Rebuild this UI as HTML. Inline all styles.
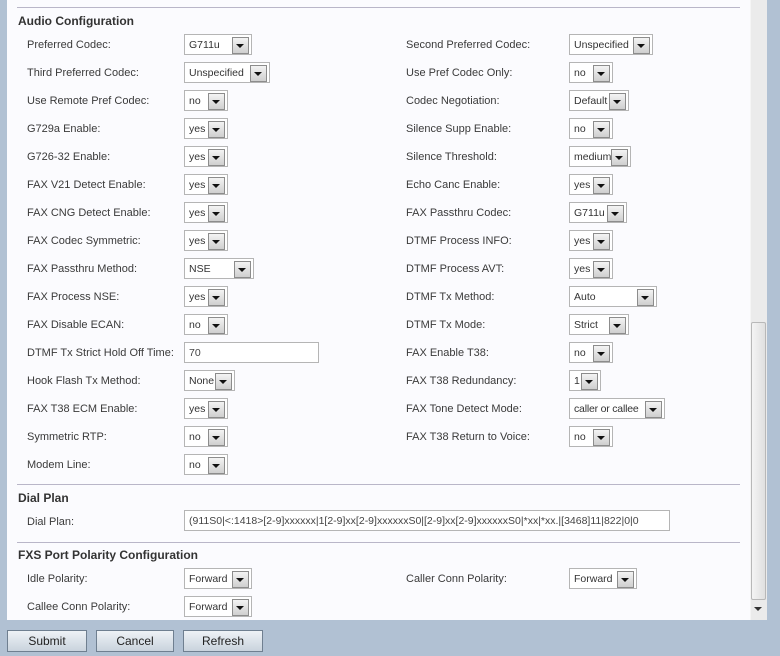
<!DOCTYPE html>
<html><head><meta charset="utf-8"><style>
*{margin:0;padding:0;box-sizing:border-box}
body{width:780px;height:656px;background:#b1c1d3;position:relative;overflow:hidden;font-family:"Liberation Sans",Arial,sans-serif;font-size:11px;color:#3a3a3a}
#panel{position:absolute;left:7px;top:0;width:743px;height:620px;background:#fbfbfe}
#sb{position:absolute;left:750px;top:0;width:17px;height:620px;background:#ebebeb;border-left:1px solid #f5f5f5}
#thumb{position:absolute;left:751px;top:322px;width:15px;height:278px;background:linear-gradient(90deg,#f4f4f4,#e0e0e0);border:1px solid #b8b8b8;border-radius:2px}
.l,.h,.s,.i,.hr,.b{position:absolute}
.l{line-height:14px}
.h{font-weight:bold;font-size:12px;color:#333}
.hr{left:17px;width:723px;height:1px;background:#b9b6c8}
.s{height:21px;border:1px solid #b5b5b5;background:#fff;padding-left:4px;display:flex;align-items:center;color:#333;font-size:10.5px;white-space:nowrap}
.s::after{content:"";position:absolute;right:2px;top:2px;width:15px;height:15px;border:1px solid #8c8c8c;background:linear-gradient(#f3f3f3,#cfcfcf)}
.s::before{content:"";position:absolute;right:7px;top:9px;border-left:4px solid transparent;border-right:4px solid transparent;border-top:4px solid #111;z-index:2}
.i{height:21px;border:1px solid #b5b5b5;background:#fff;padding-left:4px;display:flex;align-items:center;color:#444;white-space:nowrap;overflow:hidden;font-size:10.5px}
.b{top:630px;height:22px;border:1px solid #6f7f90;background:linear-gradient(#eef2f6,#c9d3dd);text-align:center;line-height:20px;font-size:12px;color:#222}
</style></head><body>
<div id="panel"></div>
<div id="sb"></div><div id="thumb"></div>
<div style="position:absolute;left:754px;top:607px;border-left:4px solid transparent;border-right:4px solid transparent;border-top:4px solid #333"></div>
<div class="hr" style="top:7px"></div>
<div class="h" style="left:18px;top:14px">Audio Configuration</div>

<div class="l" style="left:27px;top:38px">Preferred Codec:</div><div class="s" style="left:184px;top:34px;width:68px">G711u</div>
<div class="l" style="left:406px;top:38px">Second Preferred Codec:</div><div class="s" style="left:569px;top:34px;width:84px">Unspecified</div>

<div class="l" style="left:27px;top:66px">Third Preferred Codec:</div><div class="s" style="left:184px;top:62px;width:86px">Unspecified</div>
<div class="l" style="left:406px;top:66px">Use Pref Codec Only:</div><div class="s" style="left:569px;top:62px;width:44px">no</div>

<div class="l" style="left:27px;top:94px">Use Remote Pref Codec:</div><div class="s" style="left:184px;top:90px;width:44px">no</div>
<div class="l" style="left:406px;top:94px">Codec Negotiation:</div><div class="s" style="left:569px;top:90px;width:60px">Default</div>

<div class="l" style="left:27px;top:122px">G729a Enable:</div><div class="s" style="left:184px;top:118px;width:44px">yes</div>
<div class="l" style="left:406px;top:122px">Silence Supp Enable:</div><div class="s" style="left:569px;top:118px;width:44px">no</div>

<div class="l" style="left:27px;top:150px">G726-32 Enable:</div><div class="s" style="left:184px;top:146px;width:44px">yes</div>
<div class="l" style="left:406px;top:150px">Silence Threshold:</div><div class="s" style="left:569px;top:146px;width:62px">medium</div>

<div class="l" style="left:27px;top:178px">FAX V21 Detect Enable:</div><div class="s" style="left:184px;top:174px;width:44px">yes</div>
<div class="l" style="left:406px;top:178px">Echo Canc Enable:</div><div class="s" style="left:569px;top:174px;width:44px">yes</div>

<div class="l" style="left:27px;top:206px">FAX CNG Detect Enable:</div><div class="s" style="left:184px;top:202px;width:44px">yes</div>
<div class="l" style="left:406px;top:206px">FAX Passthru Codec:</div><div class="s" style="left:569px;top:202px;width:58px">G711u</div>

<div class="l" style="left:27px;top:234px">FAX Codec Symmetric:</div><div class="s" style="left:184px;top:230px;width:44px">yes</div>
<div class="l" style="left:406px;top:234px">DTMF Process INFO:</div><div class="s" style="left:569px;top:230px;width:44px">yes</div>

<div class="l" style="left:27px;top:262px">FAX Passthru Method:</div><div class="s" style="left:184px;top:258px;width:70px">NSE</div>
<div class="l" style="left:406px;top:262px">DTMF Process AVT:</div><div class="s" style="left:569px;top:258px;width:44px">yes</div>

<div class="l" style="left:27px;top:290px">FAX Process NSE:</div><div class="s" style="left:184px;top:286px;width:44px">yes</div>
<div class="l" style="left:406px;top:290px">DTMF Tx Method:</div><div class="s" style="left:569px;top:286px;width:88px">Auto</div>

<div class="l" style="left:27px;top:318px">FAX Disable ECAN:</div><div class="s" style="left:184px;top:314px;width:44px">no</div>
<div class="l" style="left:406px;top:318px">DTMF Tx Mode:</div><div class="s" style="left:569px;top:314px;width:60px">Strict</div>

<div class="l" style="left:27px;top:346px">DTMF Tx Strict Hold Off Time:</div><div class="i" style="left:184px;top:342px;width:135px">70</div>
<div class="l" style="left:406px;top:346px">FAX Enable T38:</div><div class="s" style="left:569px;top:342px;width:44px">no</div>

<div class="l" style="left:27px;top:374px">Hook Flash Tx Method:</div><div class="s" style="left:184px;top:370px;width:51px">None</div>
<div class="l" style="left:406px;top:374px">FAX T38 Redundancy:</div><div class="s" style="left:569px;top:370px;width:32px">1</div>

<div class="l" style="left:27px;top:402px">FAX T38 ECM Enable:</div><div class="s" style="left:184px;top:398px;width:44px">yes</div>
<div class="l" style="left:406px;top:402px">FAX Tone Detect Mode:</div><div class="s" style="left:569px;top:398px;width:96px;letter-spacing:-0.2px">caller or callee</div>

<div class="l" style="left:27px;top:430px">Symmetric RTP:</div><div class="s" style="left:184px;top:426px;width:44px">no</div>
<div class="l" style="left:406px;top:430px">FAX T38 Return to Voice:</div><div class="s" style="left:569px;top:426px;width:44px">no</div>

<div class="l" style="left:27px;top:458px">Modem Line:</div><div class="s" style="left:184px;top:454px;width:44px">no</div>

<div class="hr" style="top:484px"></div>
<div class="h" style="left:18px;top:491px">Dial Plan</div>
<div class="l" style="left:27px;top:515px">Dial Plan:</div><div class="i" style="left:184px;top:510px;width:486px">(911S0|&lt;:1418&gt;[2-9]xxxxxx|1[2-9]xx[2-9]xxxxxxS0|[2-9]xx[2-9]xxxxxxS0|*xx|*xx.|[3468]11|822|0|0</div>

<div class="hr" style="top:542px"></div>
<div class="h" style="left:18px;top:548px">FXS Port Polarity Configuration</div>
<div class="l" style="left:27px;top:572px">Idle Polarity:</div><div class="s" style="left:184px;top:568px;width:68px">Forward</div>
<div class="l" style="left:406px;top:572px">Caller Conn Polarity:</div><div class="s" style="left:569px;top:568px;width:68px">Forward</div>
<div class="l" style="left:27px;top:600px">Callee Conn Polarity:</div><div class="s" style="left:184px;top:596px;width:68px">Forward</div>

<div class="b" style="left:7px;width:80px">Submit</div>
<div class="b" style="left:96px;width:78px">Cancel</div>
<div class="b" style="left:183px;width:80px">Refresh</div>
</body></html>
